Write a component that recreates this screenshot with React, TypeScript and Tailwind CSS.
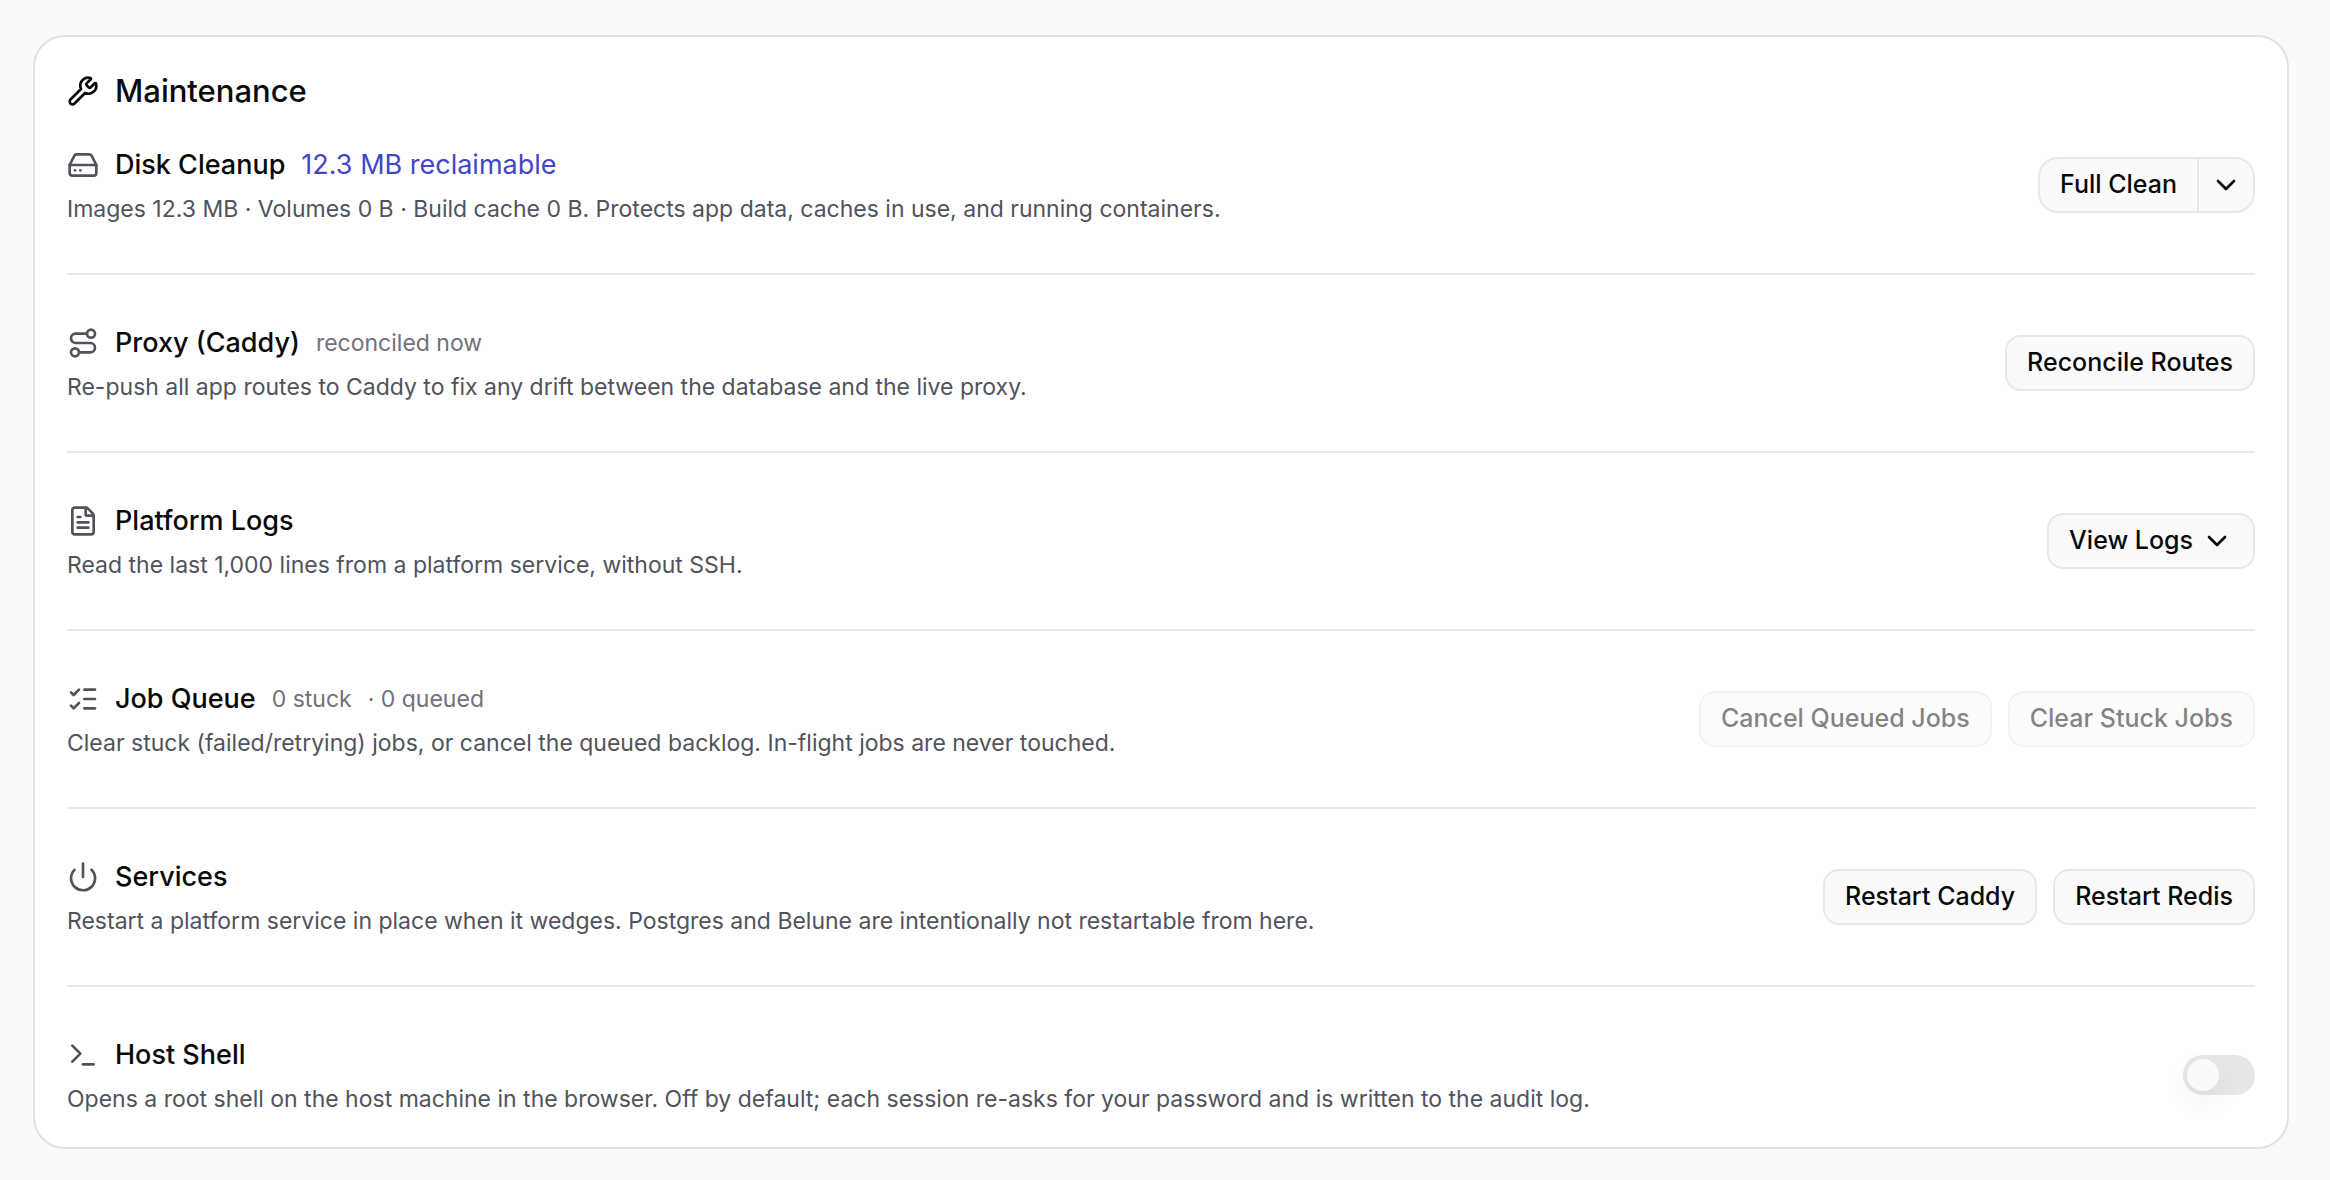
import React, { useState } from 'react';
import {
  ChevronDown,
  FileText,
  HardDrive,
  ListChecks,
  Power,
  Route,
  Terminal,
  Wrench,
  type LucideIcon
} from 'lucide-react';

interface ButtonProps {
  children: React.ReactNode;
  disabled?: boolean;
}

const Button: React.FC<ButtonProps> = ({ children, disabled }) => (
  <button
    type="button"
    disabled={disabled}
    className="flex h-14 items-center gap-2 rounded-2xl border-2 border-[#e8e8e8] bg-[#fafafa] px-5 text-[25px] font-medium whitespace-nowrap hover:bg-zinc-100 disabled:opacity-50"
  >
    {children}
  </button>
);

const SplitButton: React.FC = () => (
  <div className="flex h-14 divide-x-2 divide-[#e8e8e8] overflow-hidden rounded-[20px] border-2 border-[#e8e8e8] bg-[#fafafa]">
    <button type="button" className="px-5 text-[25px] font-medium whitespace-nowrap hover:bg-zinc-100">
      Full Clean
    </button>
    <button type="button" aria-label="More cleanup options" className="px-[11px] hover:bg-zinc-100">
      <ChevronDown className="size-8" />
    </button>
  </div>
);

interface RowProps {
  icon: LucideIcon;
  title: string;
  meta?: React.ReactNode;
  description: string;
  children: React.ReactNode;
}

const Row: React.FC<RowProps> = ({ icon: Icon, title, meta, description, children }) => (
  <section className="flex items-center justify-between gap-8 py-12 first:pt-0 last:pb-0">
    <div className="space-y-2">
      <div className="flex h-10 items-center gap-4">
        <Icon className="size-8 shrink-0 text-zinc-600" />
        <h3 className="text-[27px] leading-10 font-medium">{title}</h3>
        {meta}
      </div>
      <p className="text-[23px] leading-8 text-zinc-600">{description}</p>
    </div>
    <div className="flex shrink-0 items-center gap-4">{children}</div>
  </section>
);

export default function App() {
  const [hostShell, setHostShell] = useState(false);

  return (
    <main className="min-h-screen bg-[#fafafa] pt-[35px] pr-[41px] pb-[31px] pl-[33px] font-['Inter',sans-serif] text-zinc-950">
      <div className="rounded-[32px] border-2 border-[#e2e2e2] bg-white p-8">
        {/* Header */}
        <div className="mb-8 flex h-11 items-center gap-4">
          <Wrench className="size-8" />
          <h2 className="text-[31px] leading-[44px] font-medium">Maintenance</h2>
        </div>

        <div className="divide-y-2 divide-[#e8e8e8]">
          <Row
            icon={HardDrive}
            title="Disk Cleanup"
            meta={<span className="text-[27px] leading-10 text-[#4346c8]">12.3 MB reclaimable</span>}
            description="Images 12.3 MB · Volumes 0 B · Build cache 0 B. Protects app data, caches in use, and running containers."
          >
            <SplitButton />
          </Row>

          <Row
            icon={Route}
            title="Proxy (Caddy)"
            meta={<span className="text-[23px] leading-10 text-zinc-500">reconciled now</span>}
            description="Re-push all app routes to Caddy to fix any drift between the database and the live proxy."
          >
            <Button>Reconcile Routes</Button>
          </Row>

          <Row
            icon={FileText}
            title="Platform Logs"
            description="Read the last 1,000 lines from a platform service, without SSH."
          >
            <Button>
              View Logs
              <ChevronDown className="size-8" />
            </Button>
          </Row>

          <Row
            icon={ListChecks}
            title="Job Queue"
            meta={
              <>
                <span className="text-[23px] leading-10 text-zinc-500">0 stuck</span>
                <span className="text-[23px] leading-10 text-zinc-500">· 0 queued</span>
              </>
            }
            description="Clear stuck (failed/retrying) jobs, or cancel the queued backlog. In-flight jobs are never touched."
          >
            <Button disabled>Cancel Queued Jobs</Button>
            <Button disabled>Clear Stuck Jobs</Button>
          </Row>

          <Row
            icon={Power}
            title="Services"
            description="Restart a platform service in place when it wedges. Postgres and Belune are intentionally not restartable from here."
          >
            <Button>Restart Caddy</Button>
            <Button>Restart Redis</Button>
          </Row>

          <Row
            icon={Terminal}
            title="Host Shell"
            description="Opens a root shell on the host machine in the browser. Off by default; each session re-asks for your password and is written to the audit log."
          >
            <input
              type="checkbox"
              role="switch"
              aria-label="Host Shell"
              checked={hostShell}
              onChange={(e) => setHostShell(e.target.checked)}
              className="h-10 w-[72px] cursor-pointer appearance-none rounded-full bg-[#e6e6e8] p-1 transition-colors before:block before:size-8 before:rounded-full before:bg-[#fafafa] before:shadow-[0_10px_30px_rgba(0,0,0,0.06)] before:transition-transform checked:bg-[#4346c8] checked:before:translate-x-8"
            />
          </Row>
        </div>
      </div>
    </main>
  );
}
